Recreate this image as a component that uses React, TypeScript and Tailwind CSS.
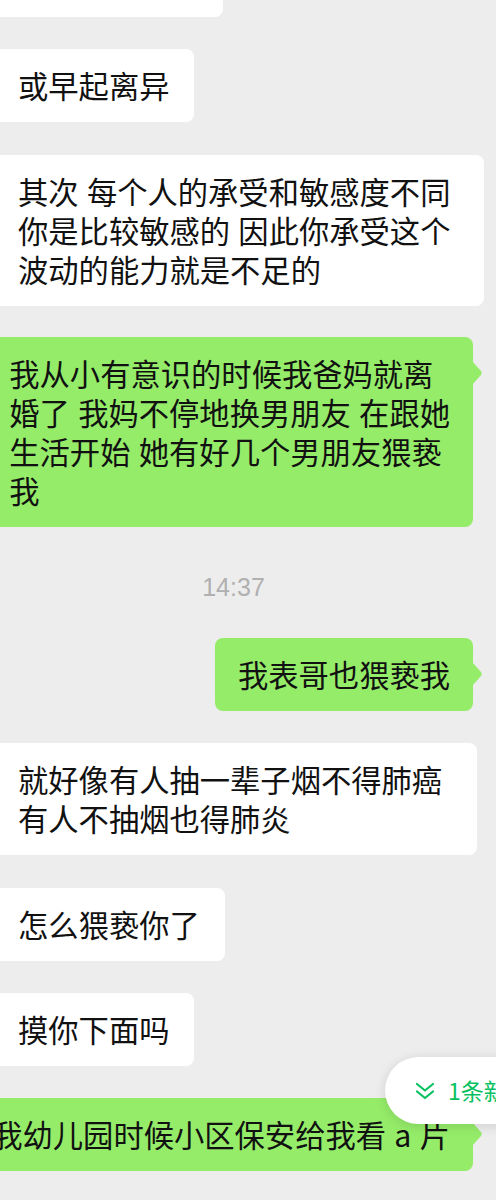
const cjk = { fontFamily: '"Noto Sans CJK SC", "Noto Sans", sans-serif' };

function Tail() {
  return (
    <svg
      className="absolute right-[-10px] top-[24px]"
      width="11"
      height="24"
      viewBox="0 0 11 24"
    >
      <path d="M0 0 L9 10 Q10.5 12 9 14 L0 24 Z" fill="#95ec69" />
    </svg>
  );
}

function Received({ lines, width, mt }: { lines: string[]; width?: string; mt: string }) {
  return (
    <div className={`flex justify-start ${mt}`}>
      <div
        className={`shrink-0 whitespace-nowrap rounded-r-lg bg-white py-[17px] pl-[18px] pr-[25px] text-[30.3px] leading-[39px] text-[#111111] [word-spacing:1.5px] ${width ?? ''}`}
      >
        {lines.map((l, i) => (
          <div key={i}>{l}</div>
        ))}
      </div>
    </div>
  );
}

function Sent({ lines, mt }: { lines: string[]; mt: string }) {
  return (
    <div className={`flex justify-end pr-[23px] ${mt}`}>
      <div className="relative shrink-0 whitespace-nowrap rounded-lg bg-[#95ec69] px-[23px] py-[17px] text-[30.3px] leading-[39px] text-[#111111] [word-spacing:1.5px]">
        {lines.map((l, i) => (
          <div key={i}>{l}</div>
        ))}
        <Tail />
      </div>
    </div>
  );
}

export default function App() {
  return (
    <div className="relative h-[1200px] w-[496px] overflow-hidden bg-[#ededed]" style={cjk}>
      <div className="flex flex-col">
        <div className="mt-[-56px] flex justify-start">
          <div className="h-[73px] w-[223px] rounded-r-lg bg-white" />
        </div>

        <Received mt="mt-[32px]" lines={['或早起离异']} />

        <Received
          mt="mt-[33px]"
          width="w-[484px]"
          lines={['其次 每个人的承受和敏感度不同', '你是比较敏感的 因此你承受这个', '波动的能力就是不足的']}
        />

        <Sent
          mt="mt-[31px]"
          lines={[
            '我从小有意识的时候我爸妈就离',
            '婚了 我妈不停地换男朋友 在跟她',
            '生活开始 她有好几个男朋友猥亵',
            '我',
          ]}
        />

        <div
          className="mt-[46px] flex h-[30px] items-center justify-center pr-[29px] text-[25px] text-[#b0b0b0]"
          style={{ fontFamily: '"Liberation Sans", Arial, sans-serif' }}
        >
          14:37
        </div>

        <Sent mt="mt-[35px]" lines={['我表哥也猥亵我']} />

        <Received
          mt="mt-[32px]"
          width="w-[477px]"
          lines={['就好像有人抽一辈子烟不得肺癌', '有人不抽烟也得肺炎']}
        />

        <Received mt="mt-[33px]" lines={['怎么猥亵你了']} />

        <Received mt="mt-[32px]" lines={['摸你下面吗']} />

        <Sent mt="mt-[32px]" lines={['我幼儿园时候小区保安给我看 a 片']} />
      </div>

      <div className="absolute left-[385px] top-[1057px] flex h-[67px] w-[200px] items-center rounded-l-full bg-white pl-[30px] shadow-[0_2px_12px_rgba(0,0,0,0.13)]">
        <svg className="shrink-0" width="20" height="18" viewBox="0 0 20 18" fill="none">
          <path
            d="M2 2 L10 8.5 L18 2 M2 9.5 L10 16 L18 9.5"
            stroke="#07c160"
            strokeWidth="2.2"
            strokeLinecap="round"
            strokeLinejoin="round"
          />
        </svg>
        <span className="ml-[13px] shrink-0 whitespace-nowrap text-[23px] text-[#07c160]">1条新消息</span>
      </div>
    </div>
  );
}
